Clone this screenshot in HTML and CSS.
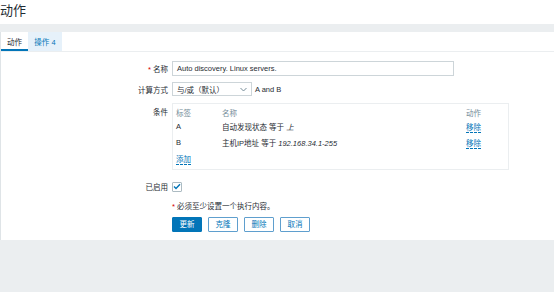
FILE: index.html
```html
<!DOCTYPE html>
<html lang="zh">
<head>
<meta charset="utf-8">
<link rel="stylesheet" href="styles.css">
</head>
<body>
<header class="page-header"><h1 class="title">动作</h1></header>
<div class="spacer"></div>
<main class="panel">
  <nav class="tabs">
    <span class="tab tab-active">动作</span>
    <span class="tab tab-other">操作 4</span>
  </nav>
  <form class="form">
    <div class="row row-name">
      <label class="lbl"><span class="req">*</span> 名称</label>
      <div class="field"><div class="input">Auto discovery. Linux servers.</div></div>
    </div>
    <div class="row row-calc">
      <label class="lbl">计算方式</label>
      <div class="field inline">
        <div class="select"><span>与/或（默认）</span>
          <svg class="chev" width="7" height="5" viewBox="0 0 7 5"><polyline points="0.5,1 3.5,4 6.5,1" fill="none" stroke="#768d99" stroke-width="1"/></svg>
        </div>
        <span class="formula">A and B</span>
      </div>
    </div>
    <div class="row row-cond">
      <label class="lbl lbl-top">条件</label>
      <div class="field">
        <div class="cond-box">
          <div class="cond-row cond-head"><span class="c1">标签</span><span class="c2">名称</span><span class="c3">动作</span></div>
          <div class="cond-row"><span class="c1">A</span><span class="c2">自动发现状态 等于 <i>上</i></span><span class="c3"><a class="link">移除</a></span></div>
          <div class="cond-row"><span class="c1">B</span><span class="c2">主机IP地址 等于 <i>192.168.34.1-255</i></span><span class="c3"><a class="link">移除</a></span></div>
          <div class="cond-row"><span class="c1"><a class="link">添加</a></span></div>
        </div>
      </div>
    </div>
    <div class="row row-enabled">
      <label class="lbl">已启用</label>
      <div class="field">
        <span class="checkbox"><svg width="8" height="7" viewBox="0 0 8 7"><polyline points="1,3.5 3,5.5 7,1.2" fill="none" stroke="#0275b8" stroke-width="1.4"/></svg></span>
      </div>
    </div>
    <div class="row row-note">
      <span class="lbl"></span>
      <div class="field note"><span class="req">*</span> 必须至少设置一个执行内容。</div>
    </div>
    <div class="row row-btns">
      <span class="lbl"></span>
      <div class="field buttons">
        <button type="button" class="btn btn-primary">更新</button>
        <button type="button" class="btn">克隆</button>
        <button type="button" class="btn">删除</button>
        <button type="button" class="btn">取消</button>
      </div>
    </div>
  </form>
</main>
</body>
</html>
```

FILE: styles.css
```css
html, body {
  margin: 0;
  padding: 0;
}
body {
  background: #ebeef0;
  font-family: "Liberation Sans", Arial, "Noto Sans CJK SC", sans-serif;
  font-size: 7.5px;
  color: #1f2c33;
  width: 554px;
  height: 292px;
  overflow: hidden;
}
.page-header {
  background: #ffffff;
  height: 24px;
}
.title {
  margin: 0;
  padding: 3px 0 0 0;
  font-size: 13px;
  line-height: 16px;
  font-weight: normal;
  color: #1f2c33;
}
.spacer {
  height: 8px;
}
.panel {
  background: #ffffff;
  border-left: 1px solid #dfe4e7;
  height: 208px;
  box-sizing: border-box;
}
.tabs {
  display: flex;
  height: 19px;
  border-bottom: 1px solid #ebeef0;
}
.tab {
  display: flex;
  align-items: center;
  justify-content: center;
  white-space: nowrap;
  box-sizing: border-box;
  height: 19px;
}
.tab-active {
  width: 27px;
  border-bottom: 2px solid #0275b8;
  padding-top: 2px;
  color: #1f2c33;
}
.tab-other {
  background: #e6f1fa;
  color: #0275b8;
  width: 34px;
}
.form {
  padding-top: 9px;
  display: flex;
  flex-direction: column;
}
.row {
  display: flex;
  align-items: center;
}
.lbl {
  width: 171px;
  flex: none;
  text-align: right;
  padding-right: 4px;
  box-sizing: border-box;
}
.lbl-top {
  align-self: flex-start;
  padding-top: 3px;
}
.req {
  color: #d40000;
}
.field {
  flex: none;
}
.inline {
  display: flex;
  align-items: center;
  gap: 3px;
}
.input {
  width: 282px;
  height: 15px;
  box-sizing: border-box;
  border: 1px solid #cdd5d9;
  padding: 0 4px;
  line-height: 13px;
}
.row-calc {
  margin-top: 6px;
}
.select {
  width: 80px;
  height: 14px;
  box-sizing: border-box;
  border: 1px solid #cdd5d9;
  padding: 0 4px;
  display: flex;
  align-items: center;
  justify-content: space-between;
}
.chev {
  display: block;
}
.row-cond {
  margin-top: 7px;
  align-items: flex-start;
}
.cond-box {
  width: 337px;
  height: 67px;
  box-sizing: border-box;
  border: 1px solid #ebeef0;
  padding: 2px 0 0 3px;
}
.cond-row {
  display: flex;
  height: 16px;
  align-items: center;
}
.cond-head {
  height: 12px;
  color: #768d99;
}
.c1 {
  width: 46px;
}
.c2 {
  width: 244px;
}
.c3 {
  width: 40px;
}
.link {
  color: #0275b8;
  border-bottom: 1px dashed #0275b8;
  cursor: pointer;
}
.row-enabled {
  margin-top: 11px;
}
.checkbox {
  display: flex;
  align-items: center;
  justify-content: center;
  width: 10px;
  height: 10px;
  box-sizing: border-box;
  border: 1px solid #acbbc2;
  border-radius: 1px;
}
.row-note {
  margin-top: 8px;
}
.row-btns {
  margin-top: 6px;
}
.buttons {
  display: flex;
  gap: 6px;
}
.btn {
  font-family: inherit;
  font-size: 7.5px;
  height: 15px;
  width: 30px;
  padding: 0;
  margin: 0;
  background: #ffffff;
  color: #0275b8;
  border: 1px solid #5f9fce;
  border-radius: 1px;
  line-height: 13px;
}
.btn-primary {
  background: #0275b8;
  color: #ffffff;
  border-color: #0275b8;
}
```
